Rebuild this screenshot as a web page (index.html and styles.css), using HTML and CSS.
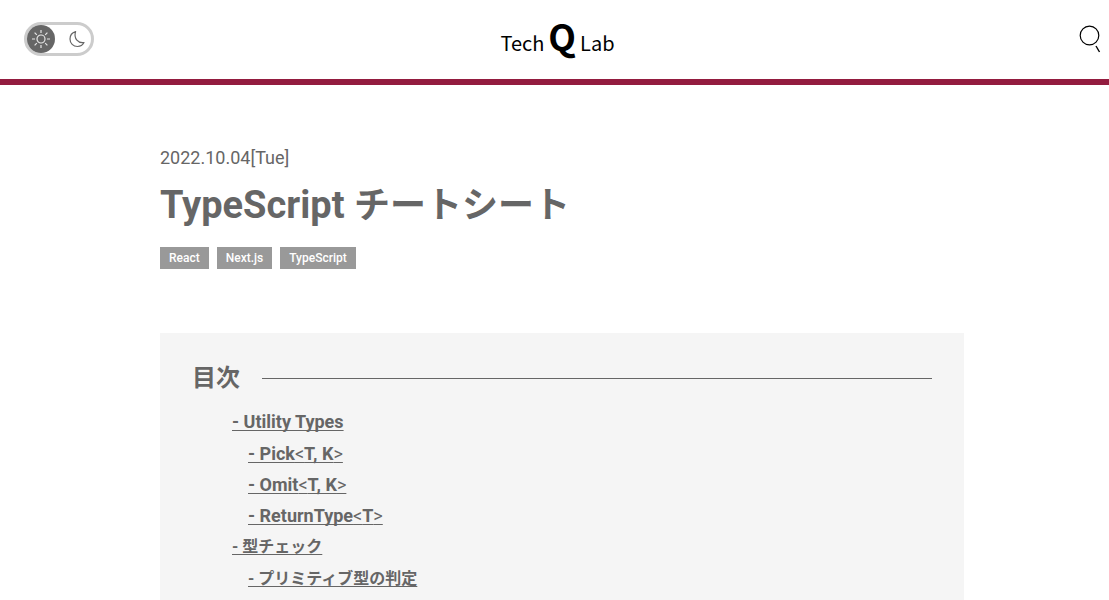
FILE: index.html
```html
<!DOCTYPE html>
<html lang="ja">
<head>
<meta charset="utf-8">
<meta name="viewport" content="width=device-width, initial-scale=1">
<title>TypeScript チートシート | Tech Q Lab</title>
<link rel="stylesheet" href="styles.css">
</head>
<body>
<header class="site-header">
  <button class="theme-toggle" type="button" aria-label="テーマ切り替え">
    <span class="theme-option theme-option-active">
      <svg width="20" height="20" viewBox="0 0 20 20" fill="none" stroke="currentColor" stroke-width="1.2" aria-hidden="true">
        <circle cx="10" cy="10" r="4"/>
        <path d="M10 1v3M10 16v3M1 10h3M16 10h3M3.6 3.6l2.2 2.2M14.2 14.2l2.2 2.2M16.4 3.6l-2.2 2.2M5.8 14.2l-2.2 2.2"/>
      </svg>
    </span>
    <span class="theme-option">
      <svg width="20" height="20" viewBox="0 0 20 20" fill="none" stroke="currentColor" stroke-width="1.2" stroke-linejoin="round" aria-hidden="true">
        <path d="M8.6 2.6C5 3.6 3 6.5 3 10c0 4.300 3.200 7.500 7.500 7.500 3 0 5.300-1.500 6.500-3.900C11.500 14.500 6.300 9.500 8.600 2.600Z"/>
      </svg>
    </span>
  </button>
  <a class="logo" href="/"><span>Tech</span><span class="logo-mark">Q</span><span>Lab</span></a>
  <button class="search" type="button" aria-label="検索">
    <svg width="24" height="30" viewBox="0 0 24 30" fill="none" stroke="currentColor" aria-hidden="true">
      <circle cx="10.500" cy="11.500" r="9.300" stroke-width="1.200"/>
      <path d="M17 22l3.500 6" stroke-width="1.400"/>
    </svg>
  </button>
</header>
<main class="article">
  <time class="date" datetime="2022-10-04">2022.10.04[Tue]</time>
  <h1 class="title">TypeScript <span class="title-ja">チートシート</span></h1>
  <ul class="tags">
    <li><a class="tag" href="/tags/react">React</a></li>
    <li><a class="tag" href="/tags/nextjs">Next.js</a></li>
    <li><a class="tag" href="/tags/typescript">TypeScript</a></li>
  </ul>
  <nav class="toc" aria-labelledby="toc-title">
    <h2 class="toc-title" id="toc-title">目次</h2>
    <ul class="toc-list">
      <li><a href="#utility-types">- Utility Types</a></li>
      <li class="toc-sub"><a href="#pick">- Pick<span class="thin">&lt;</span>T, K<span class="thin">&gt;</span></a></li>
      <li class="toc-sub"><a href="#omit">- Omit<span class="thin">&lt;</span>T, K<span class="thin">&gt;</span></a></li>
      <li class="toc-sub"><a href="#return-type">- ReturnType<span class="thin">&lt;</span>T<span class="thin">&gt;</span></a></li>
      <li class="toc-ja"><a href="#type-check">- 型チェック</a></li>
      <li class="toc-sub toc-ja"><a href="#primitive">- プリミティブ型の判定</a></li>
    </ul>
  </nav>
</main>
</body>
</html>
```
FILE: styles.css
```css
* {
  box-sizing: border-box;
}

body {
  margin: 0;
  background: #fff;
  color: #666;
  font-family: Roboto, "Noto Sans CJK JP", sans-serif;
}

ul {
  margin: 0;
  padding: 0;
  list-style: none;
}

button {
  padding: 0;
  border: 0;
  background: none;
  cursor: pointer;
}

.site-header {
  display: grid;
  grid-template-columns: 1fr auto 1fr;
  align-items: center;
  height: 85px;
  padding: 0 6px 1px 12px;
  border-bottom: 6px solid #931c3f;
}

.theme-toggle {
  display: flex;
  justify-content: space-between;
  align-items: center;
  width: 70px;
  height: 34px;
  margin-left: 12px;
  border: 3px solid #ccc;
  border-radius: 17px;
  color: #666;
}

.theme-option {
  display: flex;
  justify-content: center;
  align-items: center;
  width: 28px;
  height: 28px;
  border-radius: 50%;
}

.theme-option-active {
  background: #666;
  color: #e6e6e6;
}

.logo {
  display: flex;
  align-items: baseline;
  gap: 4px;
  color: #000;
  font: 20px/48px "Noto Sans CJK JP", sans-serif;
  text-decoration: none;
}

.logo-mark {
  font-size: 36px;
  font-weight: 700;
}

.search {
  display: flex;
  justify-self: end;
  color: #000;
}

.article {
  padding: 60px 145px 0 160px;
}

.date {
  display: block;
  font-size: 18px;
  font-weight: 400;
  line-height: 26px;
}

.title {
  margin: 8px 0 15px;
  font-size: 38px;
  font-weight: 700;
  line-height: 52px;
}

.title-ja {
  font-size: 36px;
}

.tags {
  display: flex;
  gap: 8px;
}

.tag {
  display: block;
  padding: 0 9px;
  background: #999;
  color: #fff;
  font-size: 12px;
  font-weight: 500;
  line-height: 22px;
  text-decoration: none;
}

.toc {
  margin-top: 64px;
  padding: 28px 32px;
  background: #f5f5f5;
}

.toc-title {
  display: flex;
  align-items: center;
  gap: 22px;
  margin: 0 0 11px;
  font-size: 24px;
  line-height: 34px;
}

.toc-title::after {
  content: "";
  flex: 1;
  height: 1px;
  background: #666;
}

.toc-list {
  padding-left: 40px;
  font-size: 18px;
  font-weight: 700;
  line-height: 32px;
}

.toc-list a {
  color: inherit;
  text-decoration-thickness: 1px;
  text-underline-offset: 2px;
  text-decoration-skip-ink: none;
}

.toc-sub {
  padding-left: 16px;
  line-height: 31px;
}

.toc-ja {
  font-size: 16px;
  line-height: 32px;
}

.thin {
  font-weight: 400;
}
```
